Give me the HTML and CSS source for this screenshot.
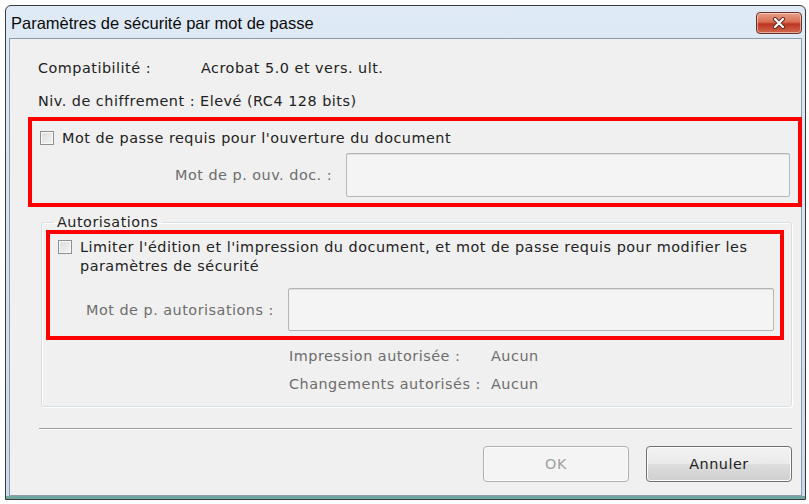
FILE: index.html
```html
<!DOCTYPE html>
<html>

<head>
  <meta charset="utf-8">
  <title>Paramètres de sécurité par mot de passe</title>
  <link rel="stylesheet" href="styles.css">
</head>

<body>
  <div class="window">
    <div class="titlebar">
      <span class="title">Paramètres de sécurité par mot de passe</span>
      <button class="close-btn" aria-label="Fermer">
        <svg width="14" height="12" viewBox="0 0 14 12">
          <path d="M3 2 L11 10 M11 2 L3 10" stroke="#5a2a20" stroke-width="4" stroke-linecap="round"/>
          <path d="M3 2 L11 10 M11 2 L3 10" stroke="#ffffff" stroke-width="2.2" stroke-linecap="round"/>
        </svg>
      </button>
    </div>

    <div class="client">
      <div class="info-row">
        <span class="info-label">Compatibilité :</span>
        <span>Acrobat 5.0 et vers. ult.</span>
      </div>
      <div class="info-row">
        <span>Niv. de chiffrement :</span>
        <span class="info-value">Elevé (RC4 128 bits)</span>
      </div>

      <div class="highlight open-box">
        <label class="check-row">
          <span class="checkbox"></span>
          <span>Mot de passe requis pour l'ouverture du document</span>
        </label>
        <div class="field-row open-field">
          <span class="field-label">Mot de p. ouv. doc. :</span>
          <span class="text-input"></span>
        </div>
      </div>

      <fieldset class="group">
        <legend>Autorisations</legend>
        <div class="highlight perm-box">
          <label class="check-row">
            <span class="checkbox"></span>
            <span>Limiter l'édition et l'impression du document, et mot de passe requis pour modifier les paramètres de sécurité</span>
          </label>
          <div class="field-row perm-field">
            <span class="field-label">Mot de p. autorisations :</span>
            <span class="text-input"></span>
          </div>
        </div>

        <div class="perm-list">
          <span>Impression autorisée :</span><span>Aucun</span>
          <span>Changements autorisés :</span><span>Aucun</span>
        </div>
      </fieldset>

      <div class="separator"></div>

      <div class="buttons">
        <button class="btn" disabled>OK</button>
        <button class="btn">Annuler</button>
      </div>
    </div>
  </div>
</body>

</html>
```

FILE: styles.css
```css
* {
  margin: 0;
  padding: 0;
  box-sizing: border-box;
}

body {
  background: #ffffff;
  font-family: 'DejaVu Sans', Verdana, sans-serif;
  font-size: 14.4px;
  letter-spacing: 0.5px;
  color: #222222;
}

.window {
  margin: 5px 0 0 5px;
  width: 801px;
  height: 495px;
  border: 1px solid #3a3a3a;
  border-radius: 6px 6px 0 0;
  background: linear-gradient(180deg, #dfeaf6 0%, #c9dbee 100%);
  padding: 0 3px 3px 3px;
  display: flex;
  flex-direction: column;
  box-shadow: inset 0 -3px 0 #6fa7a0;
}

.titlebar {
  height: 32px;
  display: flex;
  align-items: center;
  justify-content: space-between;
  padding: 0 0 0 2px;
}

.title {
  font-family: 'Liberation Sans', Arial, sans-serif;
  font-size: 16.5px;
  letter-spacing: 0;
  color: #0c0c0c;
  margin-top: 2px;
}

.close-btn {
  width: 46px;
  height: 22px;
  border: 1px solid #6b3128;
  border-radius: 4px;
  background: linear-gradient(180deg, #eaa08a 0%, #d86e52 45%, #bc3420 55%, #d46a4e 100%);
  display: flex;
  align-items: center;
  justify-content: center;
  margin-top: 2px;
  box-shadow: inset 0 0 0 1px rgba(255, 255, 255, 0.45);
}

.client {
  flex: 1;
  background: #f0f0f0;
  border: 1px solid #8d9aa8;
  padding: 12px 0 0 0;
}

.info-row {
  display: flex;
  height: 33px;
  align-items: center;
  padding-left: 28px;
}

.info-label {
  width: 163px;
}

.info-value {
  margin-left: 5px;
}

.highlight {
  border: 4px solid #ff0000;
}

.open-box {
  margin: 0 0 0 18px;
  width: 774px;
  height: 90px;
  padding: 8px 0 0 8px;
}

.check-row {
  display: flex;
  align-items: flex-start;
  gap: 8px;
  line-height: 19px;
}

.checkbox {
  flex: none;
  width: 14px;
  height: 14px;
  margin-top: 2px;
  border: 1px solid #8e8f8f;
  background: linear-gradient(135deg, #dcdcdc 0%, #f4f4f4 100%);
  box-shadow: inset 0 0 0 1px #f8f8f8;
}

.field-row {
  display: flex;
  align-items: center;
}

.field-label {
  color: #6d6d6d;
}

.open-field {
  margin-top: 5px;
  padding-left: 135px;
}

.open-field .field-label {
  width: 171px;
}

.text-input {
  height: 44px;
  border: 1px solid #b5b5b5;
  border-radius: 2px;
  background: #f4f4f4;
  box-shadow: inset 0 1px 0 #dedede;
}

.open-field .text-input {
  width: 444px;
}

.group {
  margin: 7px 0 0 31px;
  width: 751px;
  height: 193px;
  border: 1px solid #d5dfe5;
  border-radius: 3px;
  box-shadow: 1px 1px 0 #ffffff, inset 1px 1px 0 #ffffff;
  padding: 0 0 0 4px;
}

.group legend {
  margin-left: 7px;
  padding: 0 4px;
  color: #222222;
}

.perm-box {
  width: 738px;
  height: 110px;
  padding: 4px 0 0 8px;
}

.perm-box .check-row {
  padding-right: 20px;
}

.perm-field {
  margin-top: 12px;
  padding-left: 28px;
}

.perm-field .field-label {
  width: 202px;
}

.perm-field .text-input {
  width: 486px;
  height: 43px;
}

.perm-list {
  display: grid;
  grid-template-columns: 202px auto;
  row-gap: 9px;
  margin: 7px 0 0 243px;
  color: #6d6d6d;
  line-height: 19px;
}

.separator {
  margin: 21px 0 0 29px;
  width: 753px;
  height: 2px;
  border-top: 1px solid #a0a0a0;
  border-bottom: 1px solid #ffffff;
}

.buttons {
  display: flex;
  justify-content: flex-end;
  gap: 17px;
  margin: 16px 0 0 0;
  padding-right: 9px;
}

.btn {
  width: 146px;
  height: 36px;
  border: 1px solid #707070;
  border-radius: 4px;
  background: linear-gradient(180deg, #f2f2f2 0%, #ebebeb 48%, #dddddd 52%, #cfcfcf 100%);
  box-shadow: inset 0 0 0 1px #fcfcfc;
  font-family: 'DejaVu Sans', Verdana, sans-serif;
  font-size: 14.4px;
  letter-spacing: 0.5px;
  color: #222222;
}

.btn:disabled {
  border-color: #adb2b5;
  background: #f4f4f4;
  color: #a0a0a0;
}
```
